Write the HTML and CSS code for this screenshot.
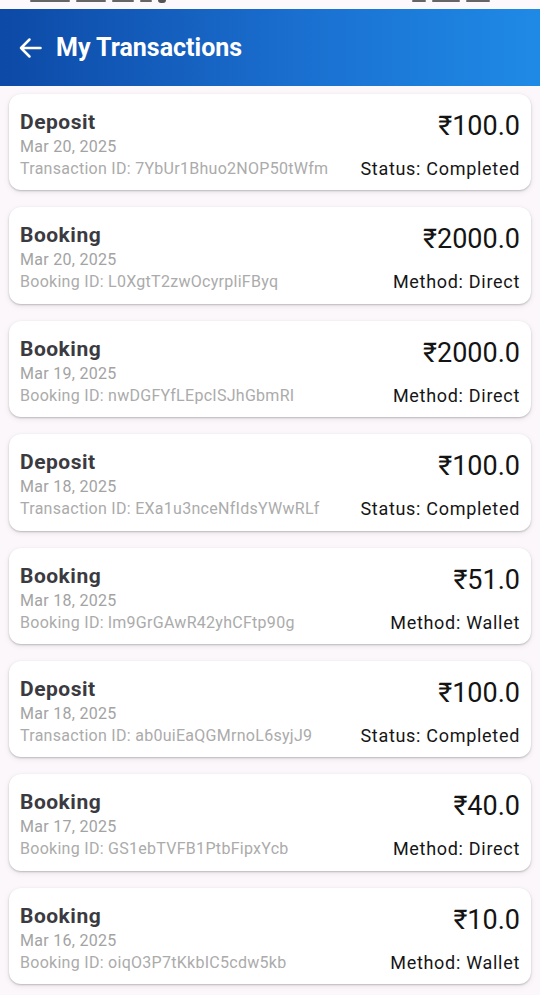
FILE: index.html
```html
<!DOCTYPE html>
<html>
<head>
<meta charset="utf-8">
<link rel="stylesheet" href="styles.css">
</head>
<body>
<div class="statusbar">
  <div class="sb-left"><span class="sb-b w40"></span><span class="sb-b w30"></span><span class="sb-b w22"></span><span class="sb-b w12"></span><span class="sb-dot"></span></div>
  <div class="sb-right"><span class="sb-b w14"></span><span class="sb-b w28"></span><span class="sb-b w24"></span></div>
</div>
<header class="appbar">
  <svg class="back" width="24" height="24" viewBox="0 0 24 24"><path d="M22.5 12H3M11.5 3.5L3 12l8.5 8.5" fill="none" stroke="#fff" stroke-width="2.5" stroke-linecap="round" stroke-linejoin="round"/></svg>
  <h1 class="title">My Transactions</h1>
</header>
<main class="list">
  <div class="card"><div class="left"><div class="kind">Deposit</div><div class="date">Mar 20, 2025</div><div class="tid">Transaction ID: 7YbUr1Bhuo2NOP50tWfm</div></div><div class="right"><div class="amt">₹100.0</div><div class="meta">Status: Completed</div></div></div>
  <div class="card"><div class="left"><div class="kind">Booking</div><div class="date">Mar 20, 2025</div><div class="tid">Booking ID: L0XgtT2zwOcyrpliFByq</div></div><div class="right"><div class="amt">₹2000.0</div><div class="meta">Method: Direct</div></div></div>
  <div class="card"><div class="left"><div class="kind">Booking</div><div class="date">Mar 19, 2025</div><div class="tid">Booking ID: nwDGFYfLEpcISJhGbmRI</div></div><div class="right"><div class="amt">₹2000.0</div><div class="meta">Method: Direct</div></div></div>
  <div class="card"><div class="left"><div class="kind">Deposit</div><div class="date">Mar 18, 2025</div><div class="tid">Transaction ID: EXa1u3nceNfIdsYWwRLf</div></div><div class="right"><div class="amt">₹100.0</div><div class="meta">Status: Completed</div></div></div>
  <div class="card"><div class="left"><div class="kind">Booking</div><div class="date">Mar 18, 2025</div><div class="tid">Booking ID: lm9GrGAwR42yhCFtp90g</div></div><div class="right"><div class="amt">₹51.0</div><div class="meta">Method: Wallet</div></div></div>
  <div class="card"><div class="left"><div class="kind">Deposit</div><div class="date">Mar 18, 2025</div><div class="tid">Transaction ID: ab0uiEaQGMrnoL6syjJ9</div></div><div class="right"><div class="amt">₹100.0</div><div class="meta">Status: Completed</div></div></div>
  <div class="card"><div class="left"><div class="kind">Booking</div><div class="date">Mar 17, 2025</div><div class="tid">Booking ID: GS1ebTVFB1PtbFipxYcb</div></div><div class="right"><div class="amt">₹40.0</div><div class="meta">Method: Direct</div></div></div>
  <div class="card"><div class="left"><div class="kind">Booking</div><div class="date">Mar 16, 2025</div><div class="tid">Booking ID: oiqO3P7tKkbIC5cdw5kb</div></div><div class="right"><div class="amt">₹10.0</div><div class="meta">Method: Wallet</div></div></div>
</main>
</body>
</html>
```

FILE: styles.css
```css
html, body {
  margin: 0;
  padding: 0;
}
body {
  background: #fcf7fb;
  font-family: Roboto, "Noto Sans", "Liberation Sans", sans-serif;
  height: 995px;
  overflow: hidden;
}
.statusbar {
  height: 9px;
  background: #fdf8fc;
  display: flex;
  justify-content: space-between;
  align-items: flex-start;
  padding: 0 50px 0 30px;
  overflow: hidden;
}
.sb-left, .sb-right {
  display: flex;
  gap: 6px;
  align-items: flex-start;
}
.sb-b {
  display: block;
  height: 2px;
  background: #666;
  border-radius: 1px;
}
.w40 { width: 40px; }
.w30 { width: 30px; }
.w22 { width: 22px; }
.w12 { width: 12px; }
.w14 { width: 14px; }
.w28 { width: 28px; }
.w24 { width: 24px; }
.sb-dot {
  display: block;
  width: 8px;
  height: 3px;
  background: #555;
  border-radius: 0 0 4px 4px;
}
.appbar {
  height: 77px;
  background: linear-gradient(90deg, #0d49a6 0%, #1a6fcf 55%, #1f8ae6 100%);
  display: flex;
  align-items: center;
  padding: 0 0 0 18px;
  box-sizing: border-box;
}
.back {
  display: block;
  margin-top: 1px;
}
.title {
  margin: 0 0 0 14px;
  color: #fff;
  font-size: 25px;
  font-weight: 700;
  line-height: 30px;
  margin-top: 1px;
}
.list {
  display: flex;
  flex-direction: column;
  gap: 17px;
  padding: 8px 9px 0 9px;
}
.card {
  background: #fff;
  border-radius: 12px;
  box-shadow: 0 1px 2px rgba(0,0,0,0.22), 0 2px 6px rgba(0,0,0,0.08);
  padding: 14px 11px 10.4px 11px;
  display: flex;
  justify-content: space-between;
}
.left {
  display: flex;
  flex-direction: column;
}
.kind {
  font-size: 21px;
  font-weight: 700;
  letter-spacing: 0.5px;
  color: #3b3a40;
  line-height: 28px;
}
.date {
  font-size: 16px;
  letter-spacing: 0.28px;
  color: #a3a3a3;
  line-height: 22px;
}
.tid {
  font-size: 16px;
  letter-spacing: 0.28px;
  color: #ababab;
  line-height: 22px;
}
.right {
  display: flex;
  flex-direction: column;
  justify-content: space-between;
  align-items: flex-end;
}
.amt {
  font-size: 27px;
  color: #141414;
  line-height: 30px;
  margin-top: 3px;
}
.meta {
  font-size: 18px;
  letter-spacing: 0.7px;
  color: #161616;
  line-height: 22px;
}
```
